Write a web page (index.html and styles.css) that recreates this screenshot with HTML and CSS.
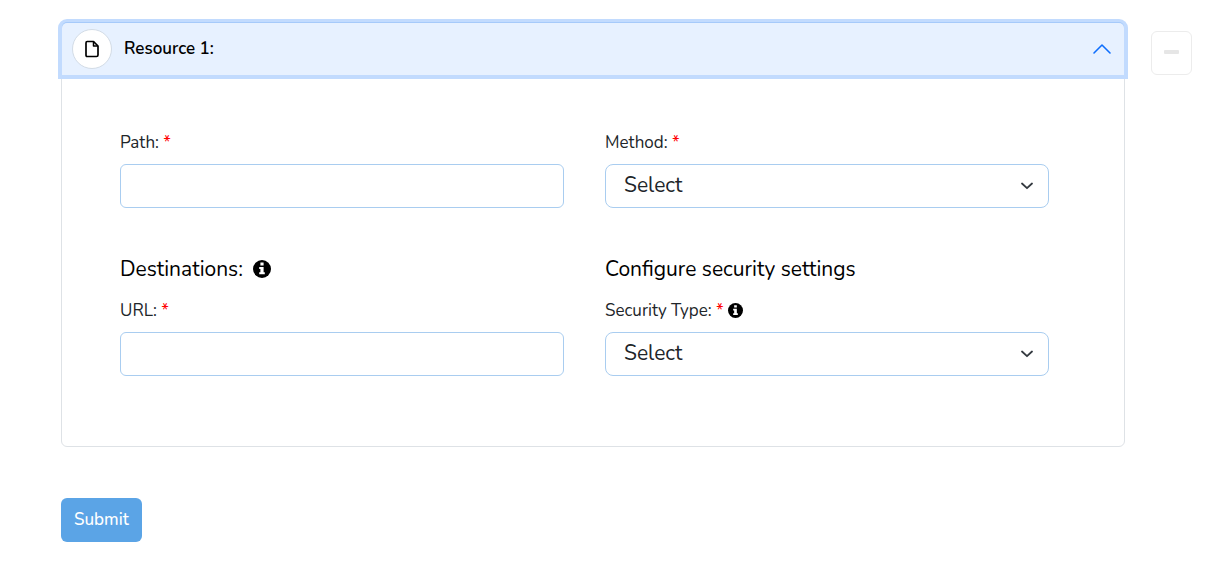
FILE: index.html
```html
<!DOCTYPE html>
<html lang="en">
<head>
    <meta charset="UTF-8">
    <meta name="viewport" content="width=device-width, initial-scale=1.0">
    <title>Resources</title>
    <link rel="stylesheet" href="styles.css">
</head>
<body>
    <form class="resource-form">
        <div class="resource-row">
            <section class="accordion">
                <button type="button" class="accordion-header" id="resourceHeader" aria-expanded="true" aria-controls="resourceBody">
                    <span class="file-badge">
                        <svg width="14" height="18" viewBox="0 0 14 18" fill="none" stroke="#000" stroke-width="1.7" stroke-linejoin="round">
                            <path d="M2.2 1.5H8.5L13 6V15Q13 16.5 11.5 16.5H2.2Q1 16.5 1 15V3Q1 1.5 2.2 1.5Z"/>
                            <path d="M8.5 1.5V6H13" stroke-width="1.5"/>
                        </svg>
                    </span>
                    <span class="accordion-title">Resource 1:</span>
                    <svg class="collapse-icon" width="20" height="12" viewBox="0 0 20 12" fill="none" stroke="#0d6efd" stroke-width="1.6" stroke-linecap="round" stroke-linejoin="round">
                        <path d="M2 10L10 2L18 10"/>
                    </svg>
                </button>

                <div class="accordion-body" id="resourceBody">
                    <div class="field">
                        <label for="path">Path: <span class="required">*</span></label>
                        <input type="text" class="control" id="path">
                    </div>

                    <div class="field">
                        <label for="method">Method: <span class="required">*</span></label>
                        <div class="select-wrap">
                            <select class="control" id="method">
                                <option>Select</option>
                            </select>
                            <svg class="caret" width="12" height="8" viewBox="0 0 12 8" fill="none" stroke="#343a40" stroke-width="1.8" stroke-linecap="round" stroke-linejoin="round">
                                <path d="M1 1.5L6 6.2L11 1.5"/>
                            </svg>
                        </div>
                    </div>

                    <div class="group">
                        <h2>Destinations:
                            <svg class="info info-large" viewBox="0 0 18 18">
                                <circle cx="9" cy="9" r="9" fill="#000"/>
                                <path d="M7.4 2.6H10.6V5.5H7.4ZM6.2 7H10.6V12.2H11.8V14.3H6.2V12.2H7.4V9.1H6.2Z" fill="#fff"/>
                            </svg>
                        </h2>
                        <div class="field">
                            <label for="url">URL: <span class="required">*</span></label>
                            <input type="text" class="control" id="url">
                        </div>
                    </div>

                    <div class="group">
                        <h2>Configure security settings</h2>
                        <div class="field">
                            <label for="securityType">Security Type: <span class="required">*</span>
                                <svg class="info" viewBox="0 0 18 18">
                                    <circle cx="9" cy="9" r="9" fill="#000"/>
                                    <path d="M7.4 2.6H10.6V5.5H7.4ZM6.2 7H10.6V12.2H11.8V14.3H6.2V12.2H7.4V9.1H6.2Z" fill="#fff"/>
                                </svg>
                            </label>
                            <div class="select-wrap">
                                <select class="control" id="securityType">
                                    <option>Select</option>
                                </select>
                                <svg class="caret" width="12" height="8" viewBox="0 0 12 8" fill="none" stroke="#343a40" stroke-width="1.8" stroke-linecap="round" stroke-linejoin="round">
                                    <path d="M1 1.5L6 6.2L11 1.5"/>
                                </svg>
                            </div>
                        </div>
                    </div>
                </div>
            </section>

            <button type="button" class="remove-btn" aria-label="Remove resource" disabled>
                <svg width="16" height="4" viewBox="0 0 16 4"><rect width="15" height="4" rx="1" fill="#e6e6e6"/></svg>
            </button>
        </div>

        <button type="submit" class="submit-btn">Submit</button>
    </form>
</body>
</html>
```

FILE: styles.css
```css
* { box-sizing: border-box; }

body {
    margin: 0;
    background: #fff;
    color: #212529;
    font-family: Nunito, Lato, sans-serif;
    font-size: 17px;
    line-height: 24px;
}

button, input, select { font: inherit; }

.resource-form { padding: 22px 20px 22px 61px; }

.resource-row {
    display: flex;
    align-items: flex-start;
    gap: 26px;
}

/* Accordion */
.accordion {
    flex: 1;
    border: 1px solid #dee2e6;
    border-radius: 6px;
}

.accordion-header {
    display: flex;
    align-items: center;
    width: 100%;
    padding: 6px 12px 6px 10px;
    border: 0;
    border-radius: 5px 5px 0 0;
    background: #e7f1ff;
    box-shadow: 0 -1px 0 0 #a6cafa, 0 0 0 4px #c2dbfe;
    color: #000;
    cursor: pointer;
}

.file-badge {
    display: flex;
    align-items: center;
    justify-content: center;
    width: 40px;
    height: 40px;
    border: 1px solid #d3dce6;
    border-radius: 50%;
    background: #fff;
}

.accordion-title {
    margin-left: 12px;
    font-weight: 600;
}

.collapse-icon { margin-left: auto; }

.accordion-body {
    display: grid;
    grid-template-columns: 1fr 1fr;
    gap: 47px 41px;
    padding: 56px 75px 70px 58px;
}

/* Fields */
.field label {
    display: block;
    margin-bottom: 9px;
}

.required { color: #f00; }

.control {
    display: block;
    width: 100%;
    height: 44px;
    padding: 0 18px;
    border: 1px solid #a9cdf0;
    border-radius: 6px;
    background: #fff;
    color: #212529;
    font-size: 21px;
}

select.control {
    appearance: none;
    border-radius: 8px;
    padding-bottom: 2px;
}

.select-wrap { position: relative; }

.caret {
    position: absolute;
    top: 18px;
    right: 16px;
    pointer-events: none;
}

.group h2 {
    margin: 0 0 16px;
    color: #000;
    font-size: 21px;
    font-weight: 400;
    line-height: 28px;
}

.info {
    width: 15px;
    height: 15px;
    vertical-align: -2px;
}

.info-large {
    width: 18px;
    height: 18px;
    margin-left: 5px;
}

/* Buttons */
.remove-btn {
    display: flex;
    align-items: center;
    justify-content: center;
    width: 41px;
    height: 44px;
    margin-top: 9px;
    padding: 0 0 3px;
    border: 1px solid #ececec;
    border-radius: 6px;
    background: #fff;
}

.submit-btn {
    height: 44px;
    margin-top: 51px;
    padding: 0 13px;
    border: 0;
    border-radius: 6px;
    background: #5ba4e6;
    color: #fff;
    font-weight: 500;
}
```
